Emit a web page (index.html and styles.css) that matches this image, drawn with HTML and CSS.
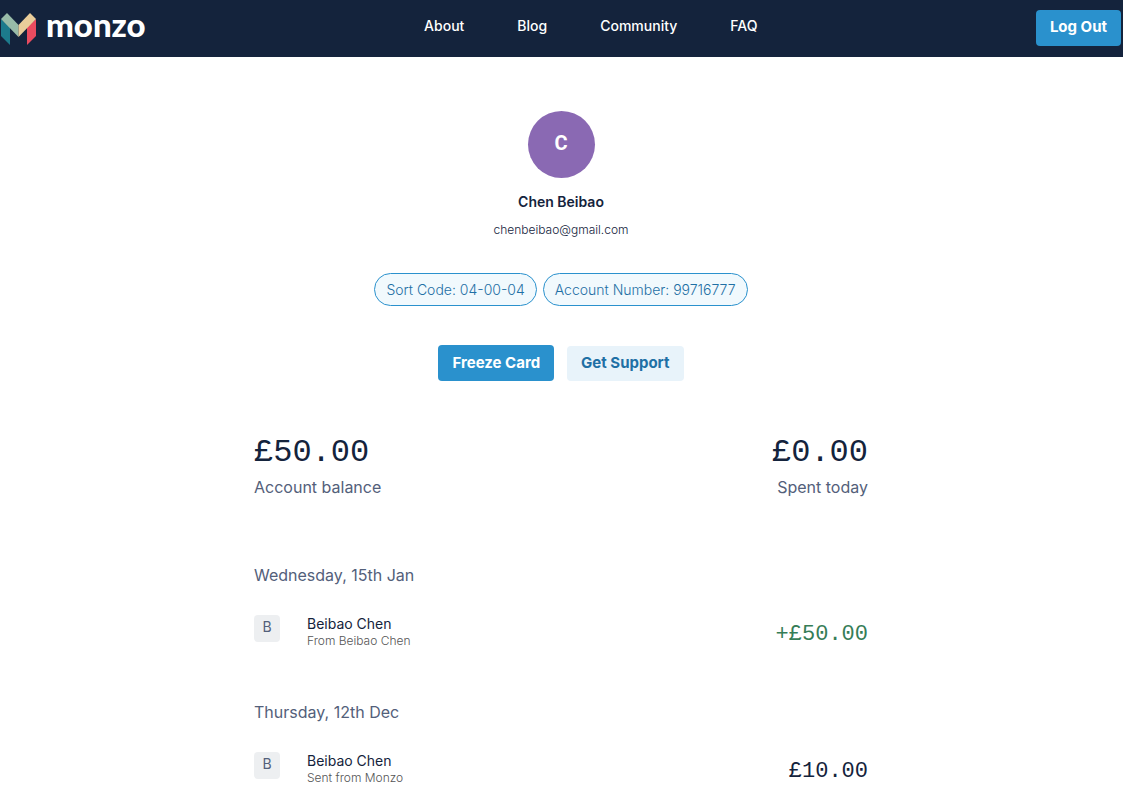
FILE: index.html
```html
<!DOCTYPE html>
<html lang="en">
<head>
<meta charset="utf-8">
<title>Monzo</title>
<link rel="stylesheet" href="styles.css">
</head>
<body>
<header class="navbar">
    <a class="logo" href="#">
        <svg width="36" height="33" viewBox="0 0 36 33" aria-hidden="true">
            <path fill="#1c7a8c" d="M0 6L9 14V32L0 23z"/>
            <path fill="#e94b5f" d="M35 6L26 14V32L35 23z"/>
            <path fill="#98bba8" d="M6 0L17.500 12V24L0 6z"/>
            <path fill="#e9cd9a" d="M29 0L17.500 12V24L35 6z"/>
        </svg>
        <span class="logo-text">monzo</span>
    </a>
    <nav class="menu">
        <a href="#">About</a>
        <a href="#">Blog</a>
        <a href="#">Community</a>
        <a href="#">FAQ</a>
    </nav>
    <button class="btn btn-primary" type="button">Log Out</button>
</header>

<main class="account">
    <section class="profile">
        <div class="avatar">C</div>
        <h1>Chen Beibao</h1>
        <p class="email">chenbeibao@gmail.com</p>
        <div class="details">
            <span class="pill">Sort Code: 04-00-04</span>
            <span class="pill">Account Number: 99716777</span>
        </div>
        <div class="actions">
            <button class="btn btn-primary" type="button">Freeze Card</button>
            <button class="btn btn-light" type="button">Get Support</button>
        </div>
    </section>

    <section class="summary">
        <div>
            <div class="total">£50.00</div>
            <div class="caption">Account balance</div>
        </div>
        <div class="spent">
            <div class="total">£0.00</div>
            <div class="caption">Spent today</div>
        </div>
    </section>

    <section class="day">
        <h2>Wednesday, 15th Jan</h2>
        <div class="transaction">
            <span class="initial">B</span>
            <div class="info">
                <div class="name">Beibao Chen</div>
                <div class="note">From Beibao Chen</div>
            </div>
            <div class="amount credit">+£50.00</div>
        </div>
    </section>

    <section class="day">
        <h2>Thursday, 12th Dec</h2>
        <div class="transaction">
            <span class="initial">B</span>
            <div class="info">
                <div class="name">Beibao Chen</div>
                <div class="note">Sent from Monzo</div>
            </div>
            <div class="amount">£10.00</div>
        </div>
    </section>
</main>
</body>
</html>
```
FILE: styles.css
```css
* {
    margin: 0;
    padding: 0;
    box-sizing: border-box;
}
body {
    background: #fff;
    color: #14233c;
    font-family: Inter, "Liberation Sans", sans-serif;
    font-size: 14px;
}
a {
    color: inherit;
    text-decoration: none;
}

/* header */
.navbar {
    display: flex;
    justify-content: space-between;
    align-items: center;
    height: 57px;
    padding: 0 2px 2px 1px;
    background: #14233c;
    color: #fff;
}
.logo {
    display: flex;
    align-items: flex-end;
    gap: 9px;
}
.logo-text {
    font-family: Lato, sans-serif;
    font-size: 33px;
    font-weight: 900;
    line-height: 28px;
    padding-bottom: 8px;
}
.menu {
    display: flex;
    gap: 53px;
    font-weight: 500;
    padding-bottom: 4px;
}

.btn {
    height: 36px;
    padding: 0 14px 2px;
    border: 0;
    border-radius: 4px;
    font-family: Inter, sans-serif;
    font-size: 15px;
    font-weight: 700;
}
.btn-primary {
    background: #2a91cd;
    color: #fff;
}
.btn-light {
    height: 35px;
    padding-bottom: 3px;
    background: #e8f3fa;
    color: #1f70a5;
}

/* profile */
.account {
    max-width: 615px;
    margin: 0 auto;
    padding-right: 1px;
}
.profile {
    display: flex;
    flex-direction: column;
    align-items: center;
    padding-top: 54px;
}
.avatar {
    width: 67px;
    height: 67px;
    border-radius: 50%;
    background: #8a69b3;
    color: #fff;
    font-family: Roboto, sans-serif;
    font-size: 20px;
    font-weight: 700;
    line-height: 65px;
    text-align: center;
}
.profile h1 {
    margin-top: 14px;
    font-size: 14px;
    font-weight: 600;
    line-height: 20px;
}
.email {
    margin-top: 8px;
    font-size: 12px;
    font-weight: 300;
    line-height: 20px;
}
.details {
    display: flex;
    gap: 6px;
    margin-top: 33px;
}
.pill {
    padding: 0 11px;
    border: 1px solid #2a91cd;
    border-radius: 17px;
    background: #f1f9fd;
    color: #1f70a5;
    font-weight: 300;
    line-height: 31px;
}
.actions {
    display: flex;
    align-items: flex-end;
    gap: 13px;
    margin-top: 39px;
}

/* balance */
.summary {
    display: flex;
    justify-content: space-between;
    margin-top: 52px;
}
.spent {
    text-align: right;
}
.total {
    font-family: "Liberation Mono", monospace;
    font-size: 32px;
    line-height: 40px;
}
.caption, .day h2 {
    color: #53607a;
    font-size: 16px;
    font-weight: 400;
    line-height: 24px;
}
.caption {
    margin-top: 2px;
}

/* transactions */
.day {
    margin-top: 64px;
}
.day + .day {
    margin-top: 45px;
}
.transaction {
    display: flex;
    align-items: flex-start;
    margin-top: 28px;
}
.initial {
    width: 26px;
    height: 27px;
    margin-right: 27px;
    border-radius: 4px;
    background: #edeff1;
    color: #53607a;
    line-height: 24px;
    text-align: center;
}
.info {
    line-height: 17px;
}
.note {
    color: #555;
    font-size: 12px;
    font-weight: 300;
}
.amount {
    margin-left: auto;
    font-family: "Liberation Mono", monospace;
    font-size: 22px;
    line-height: 40px;
}
.credit {
    color: #367d57;
}
```
